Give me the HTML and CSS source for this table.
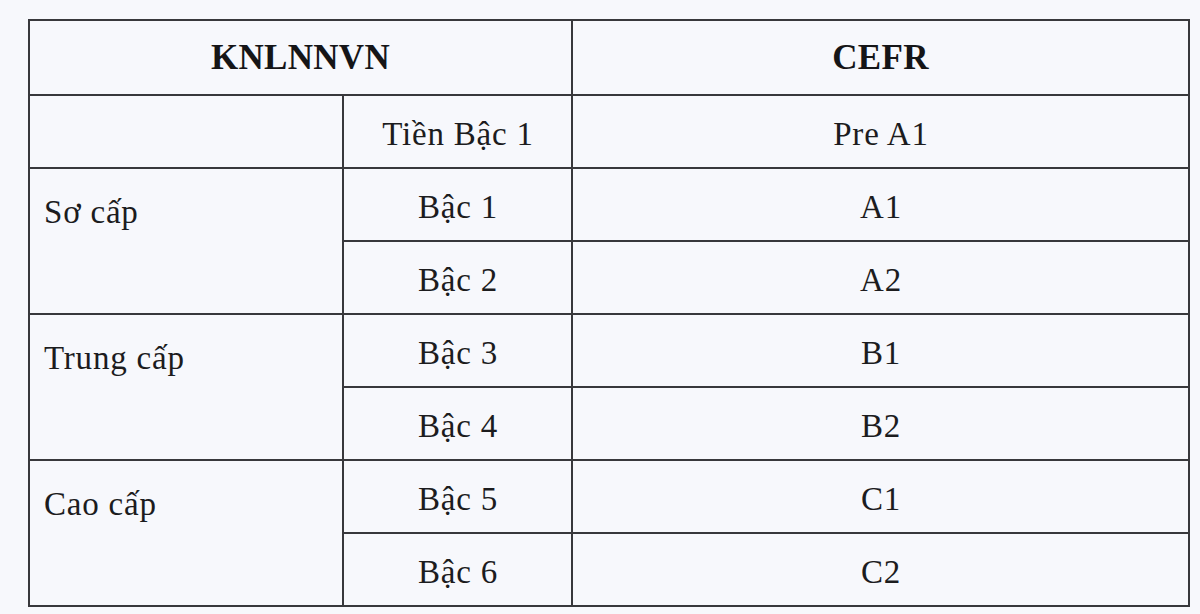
FILE: index.html
```html
<!DOCTYPE html>
<html lang="vi">
<head>
<meta charset="utf-8">
<title>KNLNNVN - CEFR</title>
<link rel="stylesheet" href="styles.css">
</head>
<body>
<div class="page">
  <table class="levels">
    <colgroup>
      <col class="c-group">
      <col class="c-level">
      <col class="c-cefr">
    </colgroup>
    <thead>
      <tr class="head-row">
        <th colspan="2">KNLNNVN</th>
        <th>CEFR</th>
      </tr>
    </thead>
    <tbody>
      <tr>
        <td class="group"></td>
        <td class="mid">Tiền Bậc 1</td>
        <td class="mid">Pre A1</td>
      </tr>
      <tr>
        <td class="group" rowspan="2">Sơ cấp</td>
        <td class="mid">Bậc 1</td>
        <td class="mid">A1</td>
      </tr>
      <tr>
        <td class="mid">Bậc 2</td>
        <td class="mid">A2</td>
      </tr>
      <tr>
        <td class="group" rowspan="2">Trung cấp</td>
        <td class="mid">Bậc 3</td>
        <td class="mid">B1</td>
      </tr>
      <tr>
        <td class="mid">Bậc 4</td>
        <td class="mid">B2</td>
      </tr>
      <tr>
        <td class="group" rowspan="2">Cao cấp</td>
        <td class="mid">Bậc 5</td>
        <td class="mid">C1</td>
      </tr>
      <tr>
        <td class="mid">Bậc 6</td>
        <td class="mid">C2</td>
      </tr>
    </tbody>
  </table>
</div>
</body>
</html>
```

FILE: styles.css
```css
html, body {
  margin: 0;
  padding: 0;
  background: #f7f8fc;
}

body {
  font-family: "Liberation Serif", "Times New Roman", serif;
  color: #1c1c1e;
  width: 1200px;
  height: 614px;
  overflow: hidden;
}

.page {
  padding: 19px 0 0 28px;
}

.levels {
  border-collapse: collapse;
  width: 1160px;
  table-layout: fixed;
}

.c-group { width: 314px; }
.c-level { width: 229px; }
.c-cefr { width: 617px; }

.levels th,
.levels td {
  border: 2px solid #38383c;
  padding: 0;
}

.head-row {
  height: 75px;
}

.levels th {
  font-weight: bold;
  font-size: 35px;
  letter-spacing: 0.3px;
  text-align: center;
  vertical-align: middle;
  color: #151517;
  padding-top: 1px;
}

.levels tbody tr {
  height: 73px;
}

.levels td {
  font-size: 33px;
  letter-spacing: 0.8px;
}

.mid {
  text-align: center;
  vertical-align: middle;
  padding-top: 5px !important;
  text-indent: 1px;
}

.group {
  text-align: left;
  vertical-align: top;
  padding: 25px 0 0 14px !important;
}
```
